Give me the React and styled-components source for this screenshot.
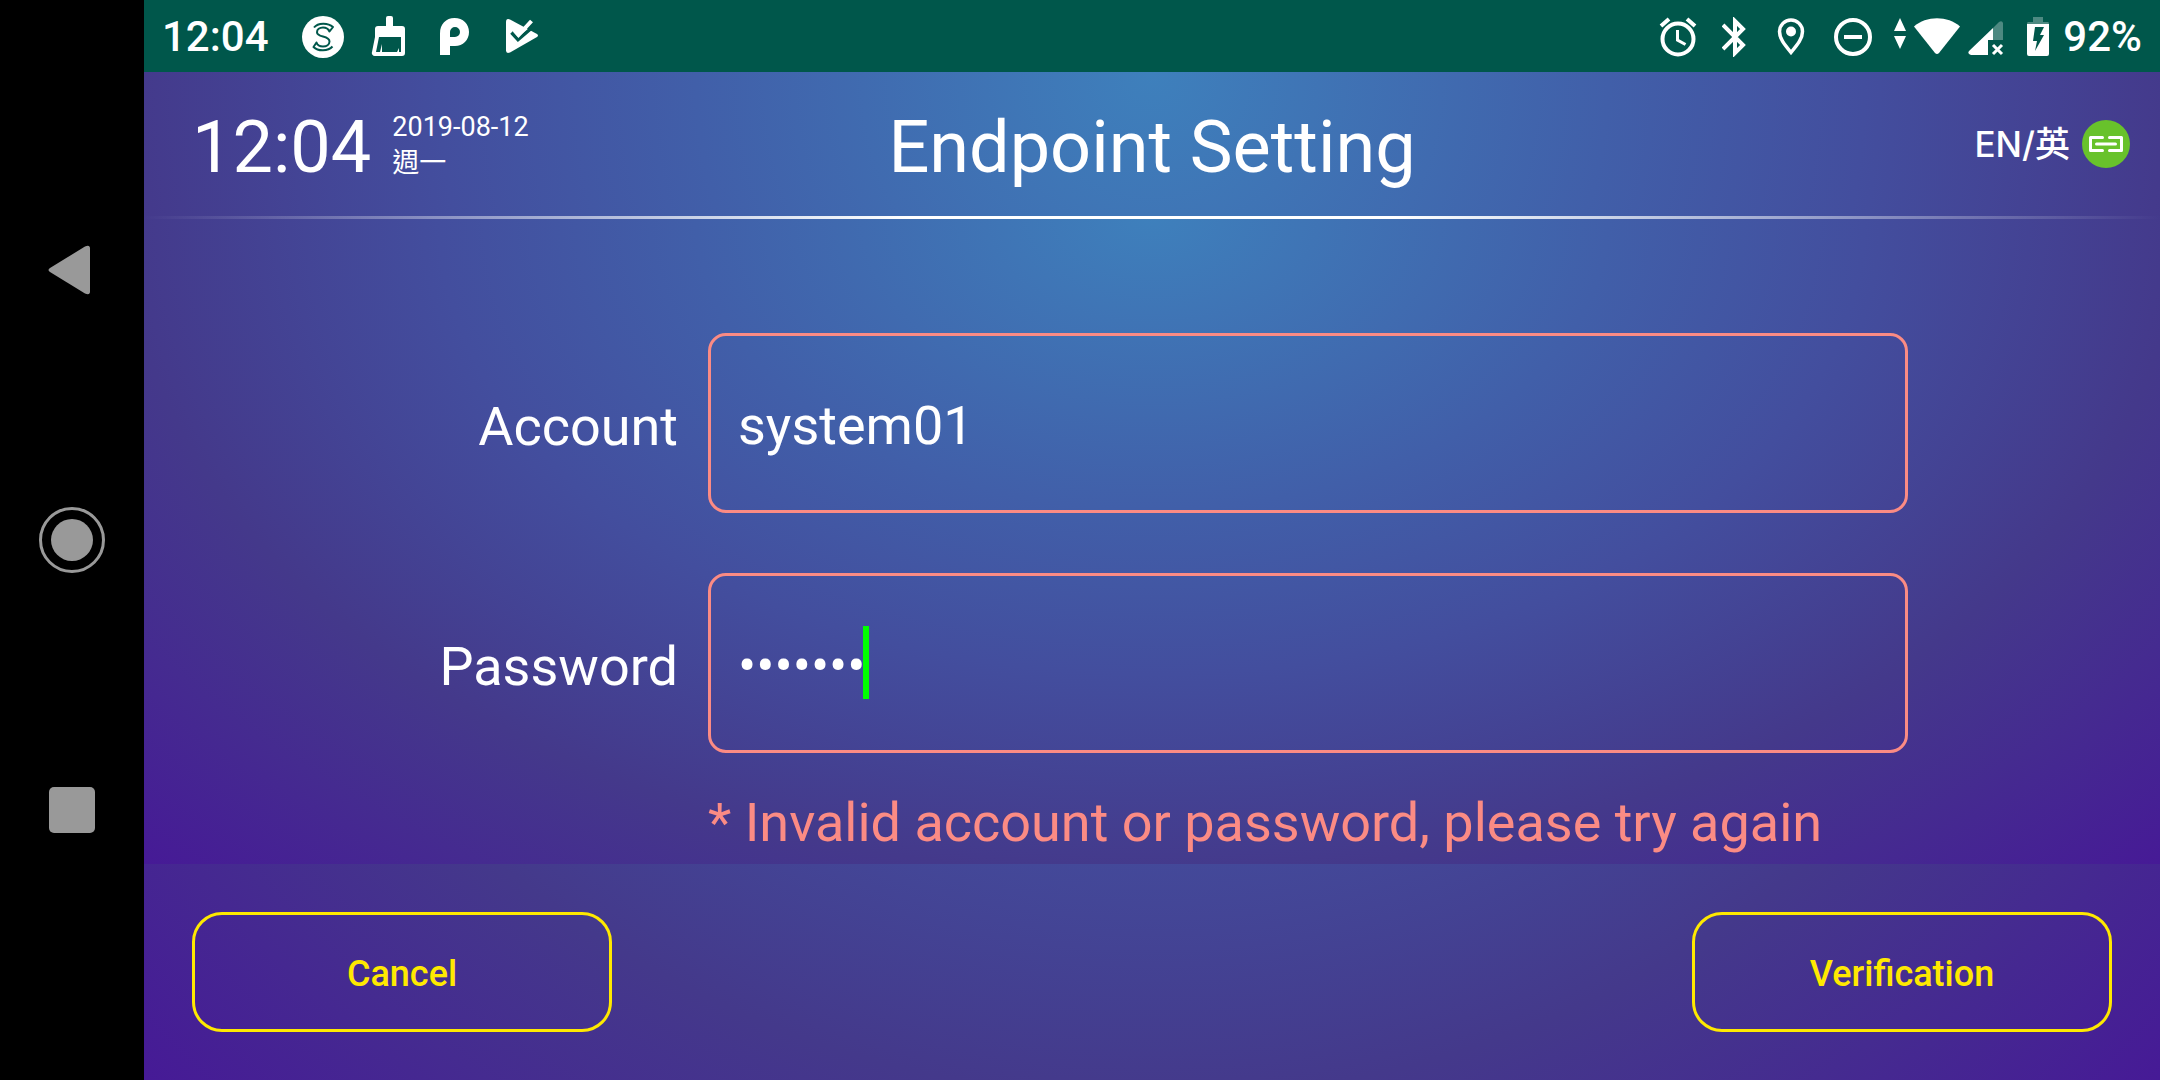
import React, { useState } from "react";
import styled, { createGlobalStyle } from "styled-components";

const GlobalStyle = createGlobalStyle`
  *, *::before, *::after { box-sizing: border-box; }
  body {
    margin: 0;
    background: #000;
    color: #fff;
    font-family: Roboto, "Noto Sans CJK TC", sans-serif;
  }
  button, input { font: inherit; color: inherit; }
`;

const glow =
  "radial-gradient(ellipse farthest-corner at 50% 0%, #3e80bc 0%, #415fa9 32%, #434e9e 50%, #44398b 72%, #461a96 100%)";

const Device = styled.div`
  display: flex;
  min-height: 100vh;
`;

const NavRail = styled.nav`
  flex: 0 0 144px;
  display: flex;
  flex-direction: column;
  align-items: center;
  justify-content: center;
  background: #000;
`;

const NavButton = styled.button`
  display: flex;
  align-items: center;
  height: 25%;
  padding: 0;
  border: 0;
  background: none;
`;

const Screen = styled.div`
  flex: 1;
  min-width: 0;
  display: flex;
  flex-direction: column;
`;

const StatusBar = styled.div`
  display: flex;
  align-items: center;
  justify-content: space-between;
  height: 72px;
  padding: 2px 18px 0;
  background: #00574b;
  font-size: 42px;
  line-height: 48px;
  font-weight: 500;
`;

const StatusGroup = styled.div`
  display: flex;
  align-items: center;
`;

const StatusIcon = styled.svg`
  display: block;
  flex: none;
  margin-left: ${(p) => p.$gap}px;
`;

const StatusText = styled.span`
  margin-left: ${(p) => p.$gap || 0}px;
`;

const Panel = styled.div`
  flex: 1;
  display: flex;
  flex-direction: column;
  background: ${glow};
`;

const Header = styled.header`
  display: grid;
  grid-template-columns: 1fr auto 1fr;
  align-items: center;
  height: 144px;
  padding: 0 30px;
`;

const ClockGroup = styled.div`
  display: flex;
  align-items: center;
  gap: 21px;
  padding-left: 18px;
`;

const Clock = styled.time`
  padding-top: 8px;
  font-size: 72px;
  line-height: 84px;
`;

const DateText = styled.div`
  padding-top: 2px;
  font-size: 27px;
  line-height: 36px;
`;

const Title = styled.h1`
  margin: 0;
  padding-top: 8px;
  font-size: 72px;
  line-height: 84px;
  font-weight: 400;
`;

const HeaderTools = styled.div`
  display: flex;
  align-items: center;
  justify-content: flex-end;
  gap: 12px;
`;

const LanguageButton = styled.button`
  padding: 0;
  border: 0;
  background: none;
  font-family: Inter, "Noto Sans CJK TC", sans-serif;
  font-size: 35px;
  line-height: 48px;
  font-weight: 500;
`;

const Body = styled.main`
  flex: 1;
  background: ${glow};
`;

const Divider = styled.div`
  height: 3px;
  background: linear-gradient(90deg, transparent, #fff 38%, #fff 62%, transparent);
`;

const Form = styled.form`
  display: grid;
  grid-template-columns: 534fr 1200fr;
  column-gap: 30px;
  row-gap: 60px;
  align-items: center;
  padding: 114px 12.5% 0 0;
`;

const Label = styled.label`
  padding-top: 8px;
  text-align: right;
  font-size: 54px;
  line-height: 64px;
`;

const Field = styled.div`
  position: relative;
`;

const Input = styled.input`
  display: block;
  width: 100%;
  height: 180px;
  padding: 4px 27px 0;
  border: 3px solid #fb8b84;
  border-radius: 18px;
  outline: 0;
  background: none;
  font-size: 54px;
  line-height: 64px;
`;

const Caret = styled.span`
  position: absolute;
  top: 53px;
  left: 155px;
  width: 6px;
  height: 73px;
  background: #00ff00;
`;

const ErrorText = styled.p`
  grid-column: 2;
  margin: -22px 0 0;
  color: #fb8b84;
  font-size: 54px;
  line-height: 64px;
  white-space: nowrap;
`;

const Footer = styled.footer`
  display: flex;
  justify-content: space-between;
  padding: 48px;
`;

const ActionButton = styled.button`
  width: 420px;
  height: 120px;
  padding: 3px 0 0;
  border: 3px solid #ffe900;
  border-radius: 30px;
  background: none;
  color: #ffe900;
  font-size: 36px;
  line-height: 42px;
  font-weight: 500;
`;

function StatusIconsLeft() {
  return (
    <>
      <StatusIcon $gap={33} width="42" height="42" viewBox="0 0 42 42">
        <circle cx="21" cy="21" r="21" fill="#fff" />
        <g fill="none" stroke="#00574b" strokeWidth="2" strokeLinejoin="round">
          <path d="M12 11.500C16 6.500 26 6.500 31 11L27.500 15.500C26 12 23.500 11.500 21 11.500C17.500 11.500 15 13.500 15 16.200C15 22 27.500 19 27.500 25.500C27.500 28.500 24.500 30.500 21 30.500C18 30.500 15.500 29.500 14.500 26.500L11.500 31C16 35.500 26 35.500 30.500 30.500" />
        </g>
      </StatusIcon>
      <StatusIcon $gap={27} width="36" height="42" viewBox="0 0 36 42">
        <path fill="#fff" fillRule="evenodd" d="M15 2a2 2 0 0 1 2-2h3a2 2 0 0 1 2 2v8h9a3 3 0 0 1 3 3v24a3 3 0 0 1-3 3H4a3 3 0 0 1-3-4L4 21v-8a3 3 0 0 1 3-3h8zM8 21L5 36h4l2-8v8h15l2-4v4h2V21z" />
      </StatusIcon>
      <StatusIcon $gap={32} width="32" height="42" viewBox="0 0 32 42">
        <path fill="#fff" fillRule="evenodd" d="M1 39V17.500C1 8 7 2 15.500 2C24 2 30 8 30 16C30 24 24 30 16 30H11V39zM11 21V16A5 5 0 1 1 16 21z" />
      </StatusIcon>
      <StatusIcon $gap={34} width="34" height="42" viewBox="0 0 34 42">
        <path fill="#fff" d="M1 6q0-4 4-2.500L32 18q2 1.500 0 3L5 36.500q-4 1.500-4-2z" />
        <path d="M6.500 16.500L13 23.500L29 10" fill="none" stroke="#00574b" strokeWidth="3.500" />
        <path d="M9.500 14.500L13.500 19L26.500 5" fill="none" stroke="#fff" strokeWidth="4" />
      </StatusIcon>
    </>
  );
}

function StatusIconsRight() {
  return (
    <>
      <StatusIcon $gap={0} width="38" height="40" viewBox="0 0 38 40" fill="none" stroke="#fff">
        <circle cx="19" cy="22" r="15.500" strokeWidth="4" />
        <path d="M2 9l8-7M36 9l-8-7" strokeWidth="4" />
        <path d="M18.500 13v10l8 4.500" strokeWidth="3" />
      </StatusIcon>
      <StatusIcon $gap={25} width="24" height="40" viewBox="0 0 24 40" fill="none" stroke="#fff" strokeWidth="4">
        <path d="M1 8l20 20-8 8V4l8 8L1 32" />
      </StatusIcon>
      <StatusIcon $gap={31} width="28" height="40" viewBox="0 0 28 40">
        <path d="M14 35.500C7 27 2.500 21.500 2.500 14.500a11.500 11.500 0 0 1 23 0C25.500 21.500 21 27 14 35.500z" fill="none" stroke="#fff" strokeWidth="3.500" />
        <circle cx="14" cy="14.500" r="5" fill="#fff" />
      </StatusIcon>
      <StatusIcon $gap={29} width="38" height="40" viewBox="0 0 38 40" fill="none" stroke="#fff" strokeWidth="4">
        <circle cx="19" cy="20" r="17" />
        <path d="M10 20h18" />
      </StatusIcon>
      <StatusIcon $gap={21} width="14" height="40" viewBox="0 0 14 40" fill="#fff">
        <path d="M7 1l6 13H1zM7 32L1 19h12z" />
      </StatusIcon>
      <StatusIcon $gap={7} width="46" height="40" viewBox="0 0 46 40" fill="#fff">
        <path d="M0 9.500C12-1.500 34-1.500 46 9.500L25 36q-2 2-4 0z" />
      </StatusIcon>
      <StatusIcon $gap={8} width="36" height="40" viewBox="0 0 36 40" fill="#fff">
        <path d="M25 11l6-6q3-2 4 1v17H25z" opacity=".3" />
        <path d="M25 11v12h-5v15H3q-4-1-2-4z" />
        <path d="M25 28l9 9M34 28l-9 9" stroke="#fff" strokeWidth="3" />
      </StatusIcon>
      <StatusIcon $gap={22} width="24" height="42" viewBox="0 0 24 42" fill="#fff">
        <path d="M7 1h10v5h5q1 0 1 2H1q0-2 1-2h5z" opacity=".3" />
        <path fillRule="evenodd" d="M1 8h22v30q0 2-2 2H3q-2 0-2-2zM9 11L7 25h4L9 35l9-16h-4l4-8z" />
      </StatusIcon>
    </>
  );
}

function LinkBadge() {
  return (
    <svg width="48" height="48" viewBox="0 0 48 48" role="img" aria-label="Connected">
      <circle cx="24" cy="24" r="24" fill="#68c22b" />
      <g fill="none" stroke="#fff" strokeWidth="3" strokeLinecap="round" strokeLinejoin="round">
        <path d="M20.500 17.500h-12v13h12M27.500 17.500h12v13h-12M14.500 24h19" />
      </g>
    </svg>
  );
}

export default function App() {
  const [account, setAccount] = useState("system01");
  const [password, setPassword] = useState("secret1");

  return (
    <>
      <GlobalStyle />
      <Device>
        <NavRail aria-label="System navigation">
          <NavButton type="button" aria-label="Back">
            <svg width="66" height="66" viewBox="0 0 66 66">
              <path d="M11 31L46 9.500q5-2 5 2v43q0 4-5 2L11 35q-3-2 0-4z" fill="#999" />
            </svg>
          </NavButton>
          <NavButton type="button" aria-label="Home">
            <svg width="66" height="66" viewBox="0 0 66 66">
              <circle cx="33" cy="33" r="31.500" fill="none" stroke="#999" strokeWidth="3" />
              <circle cx="33" cy="33" r="21" fill="#999" />
            </svg>
          </NavButton>
          <NavButton type="button" aria-label="Recent apps">
            <svg width="66" height="66" viewBox="0 0 66 66">
              <rect x="10" y="10" width="46" height="46" rx="5" fill="#999" />
            </svg>
          </NavButton>
        </NavRail>
        <Screen>
          <StatusBar>
            <StatusGroup>
              <StatusText>12:04</StatusText>
              <StatusIconsLeft />
            </StatusGroup>
            <StatusGroup>
              <StatusIconsRight />
              <StatusText $gap={13}>92%</StatusText>
            </StatusGroup>
          </StatusBar>
          <Panel>
            <Header>
              <ClockGroup>
                <Clock>12:04</Clock>
                <DateText>
                  2019-08-12
                  <br />
                  週一
                </DateText>
              </ClockGroup>
              <Title>Endpoint Setting</Title>
              <HeaderTools>
                <LanguageButton type="button">EN/英</LanguageButton>
                <LinkBadge />
              </HeaderTools>
            </Header>
            <Body>
              <Divider />
              <Form id="endpoint" onSubmit={(e) => e.preventDefault()}>
                <Label htmlFor="account">Account</Label>
                <Field>
                  <Input id="account" value={account} onChange={(e) => setAccount(e.target.value)} />
                </Field>
                <Label htmlFor="password">Password</Label>
                <Field>
                  <Input id="password" type="password" value={password} onChange={(e) => setPassword(e.target.value)} />
                  <Caret />
                </Field>
                <ErrorText role="alert">* Invalid account or password, please try again</ErrorText>
              </Form>
            </Body>
            <Footer>
              <ActionButton type="button">Cancel</ActionButton>
              <ActionButton type="submit" form="endpoint">Verification</ActionButton>
            </Footer>
          </Panel>
        </Screen>
      </Device>
    </>
  );
}
